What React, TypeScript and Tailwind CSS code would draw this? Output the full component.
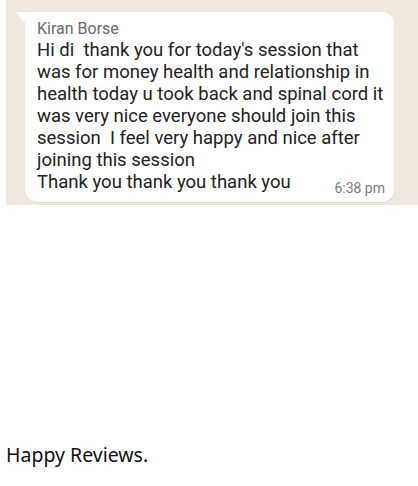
const lines = [
  "Hi di  thank you for today's session that",
  "was for money health and relationship in",
  "health today u took back and spinal cord it",
  "was very nice everyone should join this",
  "session  I feel very happy and nice after",
  "joining this session",
];

const ChatBubble = () => {
  return (
    <div className="w-[412px] h-[205px] bg-[#efe8e0] pt-[12px] pl-[10px] pr-[24px]">
      <div className="relative">
        <svg className="absolute left-0 top-0" width="12" height="14" viewBox="0 0 12 14">
          <path d="M0 0 H12 V14 L1 2 Q-1 0 0 0 Z" fill="#ffffff" />
        </svg>
        <div className="ml-[9px] w-[369px] h-[190px] bg-white rounded-[12px] rounded-tl-none shadow-[0_1px_1px_rgba(0,0,0,0.08)] pl-[12px] pr-[9px] pt-[7px] font-['Roboto',sans-serif]">
          <div className="text-[16px] leading-[20px] text-[#6b6b6b]">Kiran Borse</div>
          <div className="text-[18.5px] leading-[22px] text-[#222222] whitespace-pre">
            {lines.map((l) => (
              <div key={l}>{l}</div>
            ))}
            <div className="flex items-end justify-between">
              <span>Thank you thank you thank you</span>
              <span className="text-[14px] leading-[16px] text-[#7b7b7b] mb-[-3px]">6:38 pm</span>
            </div>
          </div>
        </div>
      </div>
    </div>
  );
};

export default function App() {
  return (
    <div className="w-[418px] h-[486px] bg-white">
      <div className="pl-[6px]">
        <ChatBubble />
      </div>
      <p className="mt-[237px] pl-[6px] text-[19.5px] leading-[26px] text-[#111111] font-['Noto_Sans',sans-serif]">
        Happy Reviews.
      </p>
    </div>
  );
}
